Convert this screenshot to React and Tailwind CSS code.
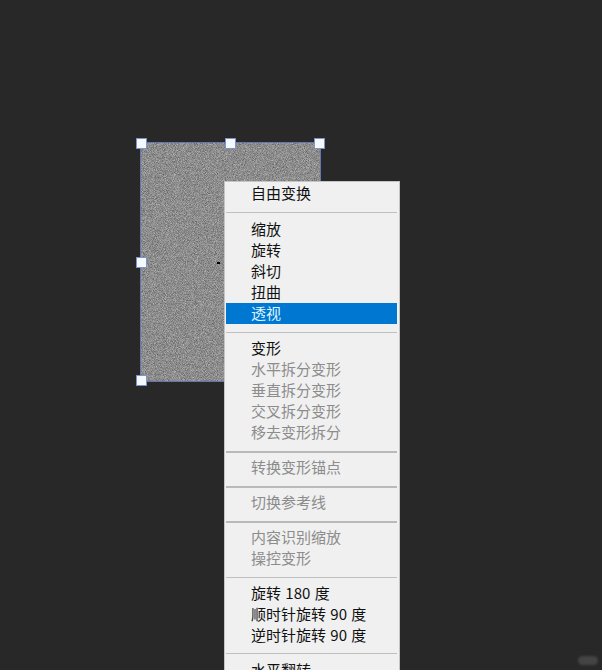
const FONT = "font-['Noto_Sans_CJK_SC','Noto_Sans',sans-serif]";

function MenuItem({ label, disabled, active }) {
  let color = "text-[#111]";
  if (disabled) color = "text-[#8c8c8c]";
  if (active) color = "bg-[#0078d2] text-[#dff5ff]";
  return (
    <div className={`flex h-[21px] items-center pb-[2px] pl-[25px] text-[15px] leading-none whitespace-pre [word-spacing:1px] ${color}`}>
      {label}
    </div>
  );
}

function Separator({ thick, className }) {
  return <div className={`${thick ? "h-[2px] bg-[#b9b9b9]" : "h-px bg-[#bfbfbf]"} ${className}`} />;
}

function Handle() {
  return <div className="h-[11px] w-[11px] border border-[#7f93c4] bg-[#f4f8ff]" />;
}

export default function App() {
  return (
    <div lang="zh-CN" className={`relative h-[670px] w-[602px] overflow-hidden bg-[#282828] antialiased ${FONT}`}>
      {/* transformed layer */}
      <div className="absolute left-[140px] top-[142px] h-[240px] w-[181px] border border-[#6477b4] bg-[#7d7d7d]">
        <svg width="179" height="238" className="block">
          <filter id="grain" x="0" y="0" width="100%" height="100%" colorInterpolationFilters="sRGB">
            <feTurbulence type="fractalNoise" baseFrequency="1.1 1.3" numOctaves="2" seed="7" />
            <feColorMatrix
              type="matrix"
              values="0.5 0 0 0 0.3  0.5 0 0 0 0.3  0.5 0 0 0 0.3  0 0 0 0 1"
            />
          </filter>
          <rect width="179" height="238" filter="url(#grain)" />
        </svg>
        <div className="absolute left-[76px] top-[119px] h-[2px] w-[3px] bg-black" />
      </div>

      {/* transform handles */}
      <div className="absolute left-[136px] top-[138px] flex h-[248px] w-[189px] flex-col justify-between">
        <div className="flex justify-between">
          <Handle />
          <Handle />
          <Handle />
        </div>
        <Handle />
        <Handle />
      </div>

      {/* context menu */}
      <div className="absolute left-[224px] top-[181px] w-[176px] border border-[#c4c4c4] border-b-0 bg-[#f0f0f0] pt-px pr-[2px] pb-4 pl-px">
        <MenuItem label="自由变换" />
        <Separator className="mt-2 mb-[6px]" />
        <MenuItem label="缩放" />
        <MenuItem label="旋转" />
        <MenuItem label="斜切" />
        <MenuItem label="扭曲" />
        <MenuItem label="透视" active />
        <Separator className="mt-2 mb-[5px]" />
        <MenuItem label="变形" />
        <MenuItem label="水平拆分变形" disabled />
        <MenuItem label="垂直拆分变形" disabled />
        <MenuItem label="交叉拆分变形" disabled />
        <MenuItem label="移去变形拆分" disabled />
        <Separator thick className="mt-2 mb-1" />
        <MenuItem label="转换变形锚点" disabled />
        <Separator thick className="mt-2 mb-1" />
        <MenuItem label="切换参考线" disabled />
        <Separator thick className="mt-2 mb-1" />
        <MenuItem label="内容识别缩放" disabled />
        <MenuItem label="操控变形" disabled />
        <Separator className="mt-2 mb-[5px]" />
        <MenuItem label="旋转 180 度" />
        <MenuItem label="顺时针旋转 90 度" />
        <MenuItem label="逆时针旋转 90 度" />
        <Separator className="mt-[7px] mb-[6px]" />
        <MenuItem label="水平翻转" />
      </div>

      {/* faint watermark */}
      <div className="absolute left-[578px] top-[656px] h-[9px] w-[20px] rounded-full bg-[#444] blur-[1px]" />
    </div>
  );
}
